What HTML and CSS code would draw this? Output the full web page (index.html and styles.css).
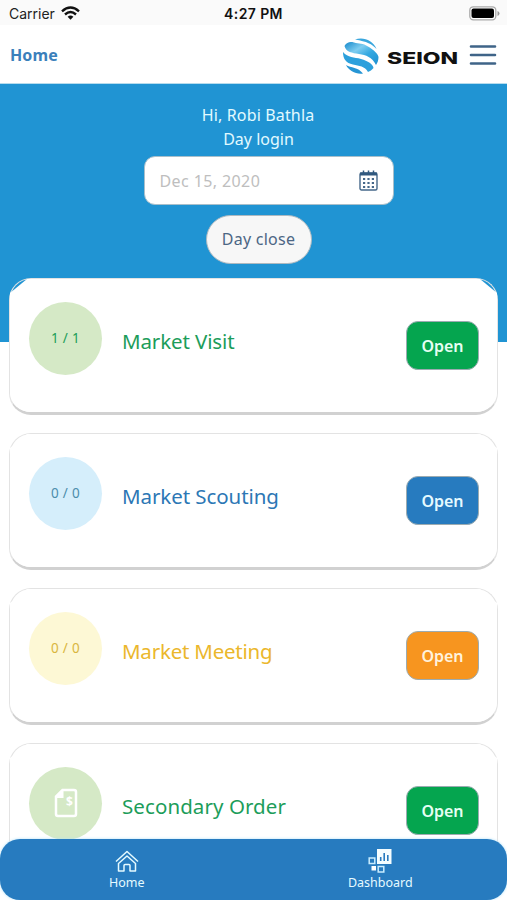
FILE: index.html
```html
<!DOCTYPE html>
<html lang="en">
<head>
<meta charset="utf-8">
<meta name="viewport" content="width=device-width, initial-scale=1">
<title>Home</title>
<link rel="stylesheet" href="styles.css">
</head>
<body>
<div class="status">
  <div class="carrier"><span>Carrier</span>
    <svg width="19" height="15" viewBox="0 0 19 15" fill="none" stroke="#111" stroke-width="2.4"><path d="M1 5.3Q9.5-2.2 18 5.3"/><path d="M4 8.5Q9.500 3.600 15 8.500"/><path d="M6.600 10.800Q9.500 8.400 12.400 10.800L9.500 13.800Z" fill="#111" stroke="none"/></svg>
  </div>
  <div class="time">4:27 PM</div>
  <svg class="battery" width="31" height="15" viewBox="0 0 31 15"><rect x=".8" y=".8" width="26" height="13" rx="3.500" fill="#fff" stroke="#aaa" stroke-width="1.300"/><rect x="2.500" y="2.500" width="22.500" height="9.600" rx="2" fill="#000"/><path d="M28.500 5v5q2-.8 2-2.500t-2-2.500" fill="#999"/></svg>
</div>
<header class="topbar">
  <a class="page-title">Home</a>
  <div class="brand">
    <svg width="116" height="38" viewBox="0 0 116 38">
      <defs>
        <linearGradient id="globe" x1="0" y1="0" x2="1" y2="1"><stop offset="0" stop-color="#1689cc"/><stop offset=".35" stop-color="#7fcdf0"/><stop offset=".6" stop-color="#35a9e1"/><stop offset="1" stop-color="#1c8fd0"/></linearGradient>
      </defs>
      <path d="M13 2.500C21-.5 31 3 34.500 12C30 7 25 4.500 13 2.500Z" fill="#39a6dd"/>
      <path d="M2.500 9C5 5 8 4.500 12 5.500C17 7 21 6 26 9.500C32 13 36 17 36.500 20C36.500 23 35.500 26 34 28C30 20 24 18 17 17C10 16 4 15 2.500 9Z" fill="url(#globe)"/>
      <path d="M1 15C6 21 12 20 19 22C26 24 31 27 31.500 31C30 33 28 34 26 35C23 29 17 29 11 27.500C4 26 1 22 1 15Z" fill="#2ca0dc"/>
      <path d="M4 28C9 31 16 30 21 36.500C14 37.500 7 34 4 28Z" fill="#2695d4"/>
      <text class="wordmark" x="45" y="27" textLength="71" lengthAdjust="spacingAndGlyphs">SEION</text>
    </svg>
    <svg class="menu" width="28" height="22" viewBox="0 0 28 22" stroke="#3f6488" stroke-width="2.600" stroke-linecap="round"><path d="M2 2.500h24M2 11h24M2 19.500h24"/></svg>
  </div>
</header>
<section class="hero">
  <p class="greet">Hi, Robi Bathla</p>
  <p class="login">Day login</p>
  <div class="date"><span>Dec 15, 2020</span>
    <svg width="19" height="21" viewBox="0 0 19 21"><rect x="1" y="3" width="17" height="17" rx="1.500" fill="none" stroke="#46688a" stroke-width="1.400"/><path d="M1 2.500h17v3H1z" fill="#31597f"/><path d="M4.500 .5v4M9.500 .5v4M14.500 .5v4" stroke="#31597f" stroke-width="1.500"/><path d="M4 9h2.200M8.400 9h2.200M12.800 9H15M4 13h2.200M8.400 13h2.200M12.800 13H15M4 17h2.200M8.400 17h2.200M12.800 17H15" stroke="#46688a" stroke-width="1.800"/></svg>
  </div>
  <button class="close">Day close</button>
</section>
<main class="cards">
  <article class="card green"><div class="badge">1 / 1</div><h2 class="t1">Market Visit</h2><button class="open">Open</button></article>
  <article class="card blue"><div class="badge">0 / 0</div><h2 class="t2">Market Scouting</h2><button class="open">Open</button></article>
  <article class="card orange"><div class="badge">0 / 0</div><h2 class="t3">Market Meeting</h2><button class="open">Open</button></article>
  <article class="card green"><div class="badge">
    <svg width="24" height="30" viewBox="0 0 24 30"><path d="M8.500 2H20Q22 2 22 4V26Q22 28 20 28H4Q2 28 2 26V8.500Z" fill="none" stroke="#fff" stroke-width="2.500"/><path d="M8.500 2v7H2" fill="#fff" stroke="#fff" stroke-width="2"/><text class="dollar" x="12" y="17.500">$</text></svg>
  </div><h2 class="t4">Secondary Order</h2><button class="open">Open</button></article>
</main>
<nav class="tabs">
  <a class="tab"><svg width="24" height="22" viewBox="0 0 24 22" fill="none" stroke="#e5faff" stroke-width="1.500"><path d="M1 11.500L12 1.500l11 10M3.500 13.500L12 6l8.500 7.500V21H15v-5.500q0-1-1-1h-4q-1 0-1 1V21H3.500z" stroke-linejoin="round"/></svg><span>Home</span></a>
  <a class="tab"><svg width="24" height="24" viewBox="0 0 24 24"><path d="M9 0h14.500v15H9z" fill="#f4fdff"/><path d="M12.700 12V8M16.200 12V4M19.800 12V6" stroke="#277bbf" stroke-width="1.600"/><path d="M1.200 9h5.600v5.600H1.200zM10.200 17.400h5.600V23h-5.600z" fill="none" stroke="#c9edff" stroke-width="1.500"/><rect x="3.500" y="17" width="4.500" height="4.500" fill="#fff"/></svg><span class="dash">Dashboard</span></a>
</nav>
</body>
</html>
```
FILE: styles.css
```css
* { box-sizing: border-box; }
body { margin: 0; width: 507px; height: 900px; overflow: hidden; background: #fff; font-family: "Noto Sans", sans-serif; display: flex; flex-direction: column; position: relative; }
button { font-family: inherit; padding: 0; }
p, h2 { margin: 0; font-weight: 400; white-space: nowrap; }
svg { display: block; flex: none; }
.status { flex: none; height: 25px; padding: 2px 7px 0 9px; background: #fafafa; display: grid; grid-template-columns: 1fr auto 1fr; align-items: center; font-family: Inter, sans-serif; font-size: 14px; color: #222; }
.carrier { display: flex; align-items: center; gap: 6px; }
.time { font-weight: 600; font-size: 14px; letter-spacing: .4px; color: #111; margin-right: 2px; }
.battery { justify-self: end; margin-top: -1px; }
.topbar { flex: none; height: 59px; padding: 0 10px; display: flex; align-items: center; justify-content: space-between; border-bottom: 1px solid #b6dced; }
.page-title { font-weight: 700; font-size: 16px; letter-spacing: .1px; color: #3b80bb; padding-top: 2px; }
.brand { display: flex; align-items: center; gap: 11px; margin-top: 3px; }
.wordmark { font-family: Inter, sans-serif; font-weight: 800; font-size: 16.5px; fill: #111; }
.menu { margin-top: -2px; }
.hero { flex: none; height: 258px; padding-top: 19px; background: #2094d3; display: flex; flex-direction: column; align-items: center; color: #e2faff; font-size: 16px; line-height: 24px; }
.greet { padding-left: 9px; letter-spacing: .15px; }
.login { padding-left: 10px; }
.date { width: 250px; height: 49px; margin: 5px 0 0 30px; padding: 0 15px 0 15px; display: flex; align-items: center; justify-content: space-between; background: #fff; border: 1px solid #a8bfcb; border-radius: 11px; color: #bebebe; letter-spacing: .4px; }
.close { width: 106px; height: 49px; margin: 10px 0 0 10px; padding-bottom: 1px; background: #f7f7f7; border: 1px solid #aeb9c0; border-radius: 25px; color: #4c6684; font-size: 16px; letter-spacing: .25px; }
.cards { padding: 0 9px; margin-top: -64px; display: flex; flex-direction: column; gap: 18px; }
.card { flex: none; position: relative; height: 137px; padding: 0 18px 0 19px; border: 1px solid #e3e3e3; border-bottom: 3px solid #d1d1d1; border-radius: 22px; display: flex; align-items: flex-start; isolation: isolate; }
.card::before { content: ""; position: absolute; inset: 0; z-index: -1; background: #fff; clip-path: polygon(17px 0, calc(100% - 17px) 0, 100% 14px, 100% calc(100% - 8px), calc(100% - 8px) 100%, 8px 100%, 0 calc(100% - 8px), 0 14px); border-radius: 0 0 21px 21px; }
.badge { width: 73px; height: 73px; margin-top: 23px; padding-bottom: 2px; border-radius: 50%; display: flex; align-items: center; justify-content: center; font-size: 13.500px; letter-spacing: .3px; }
.card h2 { margin: 47px 0 0 20px; flex: 1; font-size: 20.500px; line-height: 30px; }
.card .t1 { letter-spacing: -.12px; }
.card .t2 { letter-spacing: -.07px; }
.card .t3 { letter-spacing: -.22px; }
.card .t4 { letter-spacing: .08px; }
.open { width: 73px; height: 49px; margin-top: 42px; border: 1px solid #9cabb1; border-radius: 12px; color: #e6fff3; font-size: 16px; font-weight: 600; letter-spacing: -.1px; }
.green { color: #1c9d5a; } .green .badge { background: #d5e9c6; } .green .open { background: #05a54f; }
.blue { color: #2c77b5; } .blue .badge { background: #d5eefb; color: #4b8dab; } .blue .open { background: #277bbf; color: #e5faff; }
.orange { color: #ebb72c; } .orange .badge { background: #fdf8d5; color: #d9b63e; } .orange .open { background: #f7951f; color: #fff2dc; }
.dollar { font-size: 12px; font-weight: 700; fill: #fff; }
.tabs { position: absolute; left: 0; bottom: 0; width: 507px; height: 61px; display: grid; grid-template-columns: 1fr 1fr; background: #277bbf; border-radius: 20px; box-shadow: 0 0 3px #acdff8; }
.tab { display: flex; flex-direction: column; align-items: center; padding-top: 10px; color: #e5faff; font-size: 12.500px; line-height: 18px; }
.tab svg { height: 24px; }
.tab span { margin-top: 1px; }
```
